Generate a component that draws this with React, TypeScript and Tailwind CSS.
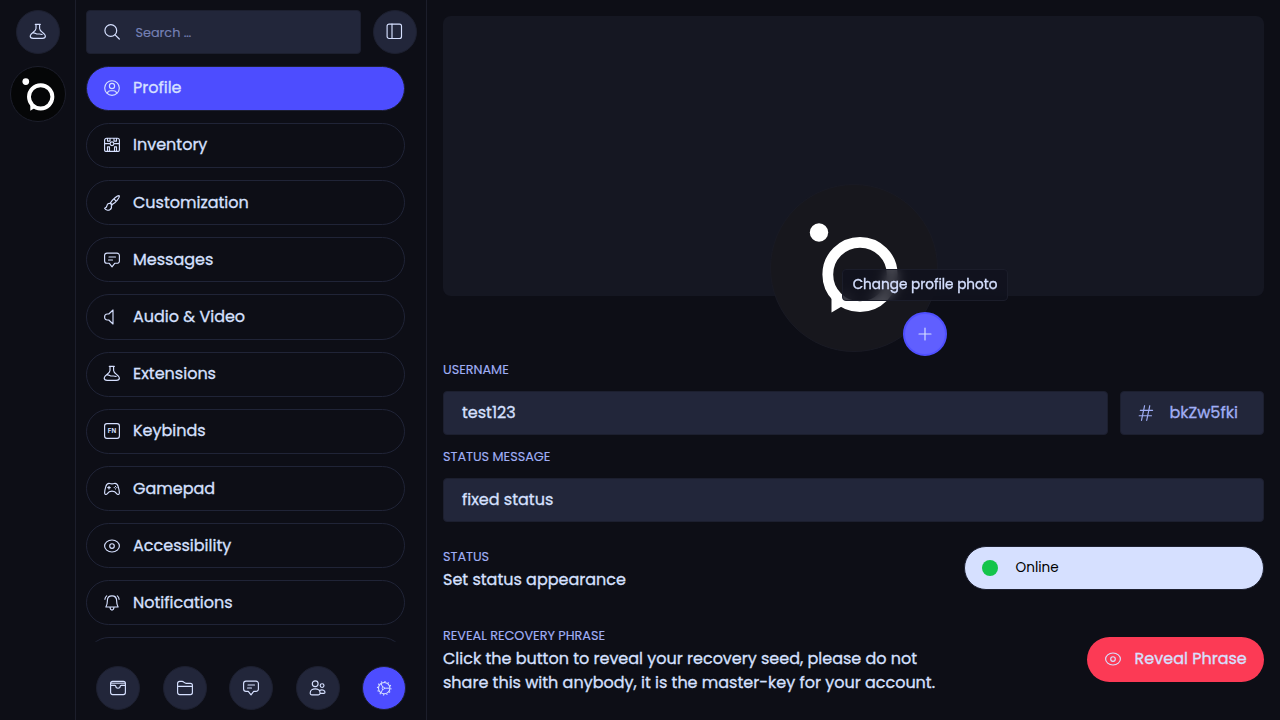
import type { ReactNode } from "react";

type IconProps = { className?: string; children: ReactNode };

function Glyph({ className = "", children }: IconProps) {
  return (
    <svg
      viewBox="0 0 16 16"
      className={"size-4 shrink-0 overflow-visible " + className}
      fill="none"
      stroke="currentColor"
      strokeWidth="1.15"
      strokeLinecap="round"
      strokeLinejoin="round"
    >
      {children}
    </svg>
  );
}

const Beaker = () => (
  <Glyph>
    <path d="M5.300.4h5M6 .4v4.200c0 1.700-1.500 2.700-3.100 3.900C1.300 9.700.2 11 .2 12.100c0 1.400 1.200 2.300 3 2.300h9.200c1.800 0 3-.9 3-2.300 0-1.100-1.200-2.400-2.800-3.600C11 7.300 9.600 6.300 9.600 4.600V.4M2.800 9c2-.7 3 .8 4.700 1 1.700.1 2.700-.4 4.600.5" />
  </Glyph>
);
const User = () => (
  <Glyph>
    <circle cx="8" cy="8" r="7.300" />
    <circle cx="8" cy="6" r="2.600" />
    <path d="M3.300 13.400c.4-2 1.700-2.700 3.200-2.700h3c1.500 0 2.800.7 3.200 2.700" />
  </Glyph>
);
const Inventory = () => (
  <Glyph>
    <path d="M2.600 1.200h10.800a2 2 0 0 1 2 2v10.100a1 1 0 0 1-1 1H1.600a1 1 0 0 1-1-1V3.200a2 2 0 0 1 2-2ZM.6 6.600h5M10.400 6.600h5M3.500 1.200v2.900h2.500V1.200M10 1.200v2.900h2.500V1.200M3.500 14.300V9.800h2v4.500M10.500 14.300V9.800h2v4.500" />
    <circle cx="8" cy="6.700" r="1.900" />
  </Glyph>
);
const Brush = () => (
  <Glyph>
    <path d="M15.300.7c-1.800-.5-6.700 3.600-8.800 7.200l1.700 1.700C11.800 7.500 15.900 2.500 15.300.7ZM6.300 8.500c-1.800-.5-3.100.5-3.300 2.100-.2 1.500-.9 2.200-2.400 2.700.9 1.600 3.400 2.500 5.200 1.500 1.500-.9 2-2.600 1.500-3.900M6.100 8.300l1.900 1.900M10.500 4.500l1.200 1.200" />
  </Glyph>
);
const Chat = () => (
  <Glyph>
    <path d="M3 1.100h10a2.400 2.400 0 0 1 2.400 2.400v5.400a2.400 2.400 0 0 1-2.400 2.400h-2.300L8 14.900l-2.700-3.600H3A2.400 2.400 0 0 1 .6 8.900V3.500A2.400 2.400 0 0 1 3 1.100ZM5 5h6.500M4.500 8h4" />
  </Glyph>
);
const Speaker = () => (
  <Glyph>
    <path d="M9 1v14l-4.200-4H3.300C1.400 11 .6 9.800.6 8s.8-3 2.700-3h1.500L9 1Z" />
  </Glyph>
);
const Keyboard = () => (
  <Glyph>
    <rect x=".6" y=".6" width="14.800" height="14.800" rx="2.300" />
    <text x="8" y="10.400" textAnchor="middle" fontSize="6.200" fontWeight="700" fill="currentColor" stroke="none" fontFamily="Inter, sans-serif">
      FN
    </text>
  </Glyph>
);
const Gamepad = () => (
  <Glyph>
    <path d="M5 2.300c.8 0 1 .6 3 .6s2.200-.6 3-.6c1.500 0 2.600 1.100 3.200 3.300.7 2.200 1.200 4.500 1.200 6.200 0 1.800-1.700 2.300-2.700.8-1-1.600-1.900-2.500-4.700-2.500s-3.700.9-4.700 2.500c-1 1.500-2.700 1-2.700-.8 0-1.700.5-4 1.200-6.200C2.400 3.400 3.500 2.300 5 2.300ZM3.700 6.600h2.600M5 5.300v2.600M10.200 6.600h.1M12.800 6.600h.1M11.500 5.300v.1M11.500 7.900v.1" />
  </Glyph>
);
const Eye = ({ className = "" }: { className?: string }) => (
  <Glyph className={className}>
    <path d="M8 2c4.300 0 7.400 2.900 7.400 6S12.300 14 8 14 .6 11.100.6 8 3.700 2 8 2Z" />
    <circle cx="8" cy="8" r="2.300" />
  </Glyph>
);
const Bell = () => (
  <Glyph>
    <path d="M8 .9c-3 0-4.600 2.200-4.600 4.700 0 3-.3 4.200-1.500 6.400h12.200c-1.200-2.200-1.500-3.400-1.500-6.400C12.600 3.100 11 .9 8 .9ZM6 12.300c.2 1.700.9 2.800 2 2.800s1.800-1.100 2-2.800M2.700.9C1.500 1.800 1 2.800.9 4.300M13.300.9c1.200.9 1.700 1.900 1.800 3.400" />
  </Glyph>
);
const Archive = () => (
  <Glyph>
    <path d="M2.600 1.400h10.800a2 2 0 0 1 2 2v9.200a2 2 0 0 1-2 2H2.600a2 2 0 0 1-2-2V3.400a2 2 0 0 1 2-2ZM.6 5.300h4.200c.7 0 1 .4 1 1 0 1.100.8 1.900 2.200 1.900s2.200-.8 2.200-1.900c0-.6.300-1 1-1h4.200" />
    <path d="M1 3.300h14" strokeOpacity=".7" strokeWidth="1.400" />
  </Glyph>
);
const Folder = () => (
  <Glyph>
    <path d="M.6 12.600V3.400a2 2 0 0 1 2-2h2.500c1.800 0 2.200 1.900 4 1.900h4.300a2 2 0 0 1 2 2v7.300a2 2 0 0 1-2 2H2.600a2 2 0 0 1-2-2ZM.6 6.300h14.800" />
  </Glyph>
);
const Users = () => (
  <Glyph>
    <g transform="translate(-.5 0)">
      <circle cx="5.700" cy="3.700" r="2.900" />
      <circle cx="12.600" cy="5.600" r="1.900" />
      <path d="M5.700 8.900c2.800 0 4.900 1.700 4.900 4 0 1.300-.6 1.900-1.700 1.900H2.500C1.300 14.800.7 14.200.7 12.900c0-2.300 2.200-4 5-4ZM10.200 10.400c3-1.300 5.300.2 5.300 1.900 0 .9-.5 1.100-1.200 1.100h-3.500" />
    </g>
  </Glyph>
);
const Cog = () => (
  <Glyph>
    <circle cx="8.200" cy="8.200" r="5.700" strokeWidth="1.100" />
    <circle cx="8.200" cy="8.200" r="6.700" strokeWidth="1.200" strokeLinecap="butt" strokeDasharray="1.200 2.308" />
    <circle cx="7.300" cy="8.200" r="1.200" strokeWidth=".8" />
    <path d="M8.700 8.200h4.800M6.700 7.100 5.100 3.800M6.700 9.300l-1.600 3.300" strokeWidth="1" />
  </Glyph>
);
const Magnifier = () => (
  <Glyph>
    <circle cx="6.800" cy="6.500" r="5.900" strokeWidth="1.200" />
    <path d="m11.100 10.800 4.200 4.200" strokeWidth="1.200" />
  </Glyph>
);
const Sidebar = () => (
  <Glyph>
    <rect x=".1" y=".1" width="14.400" height="14.400" rx="2" />
    <path d="M5 .1v14.400" />
  </Glyph>
);
const Hash = () => (
  <Glyph>
    <path d="M6.600.7 3.500 15.400M11.800.7 8.700 15.400M2.300 5.300h12.300M1.200 10.700h12.300" />
  </Glyph>
);
const Plus = () => (
  <Glyph>
    <path d="M8 2v12M2 8h12" />
  </Glyph>
);

function Logo({ className }: { className: string }) {
  return (
    <svg viewBox="0 0 168 168" className={className}>
      <circle cx="90" cy="90.500" r="32.200" fill="none" stroke="#fff" strokeWidth="10.800" />
      <path d="M61.500 112v16.500l11-6.500-2-10z" fill="#fff" />
      <circle cx="49" cy="48.500" r="9.200" fill="#fff" />
    </svg>
  );
}

function RoundButton({ children, active = false }: { children: ReactNode; active?: boolean }) {
  return (
    <button
      className={
        "flex size-11 shrink-0 items-center justify-center rounded-full border " +
        (active ? "border-[#1d2035] bg-[#4d4dff]" : "border-[#1d2030] bg-[#22263a]")
      }
    >
      {children}
    </button>
  );
}

const items = [
  { name: "Profile", icon: <User /> },
  { name: "Inventory", icon: <Inventory /> },
  { name: "Customization", icon: <Brush /> },
  { name: "Messages", icon: <Chat /> },
  { name: "Audio & Video", icon: <Speaker /> },
  { name: "Extensions", icon: <Beaker /> },
  { name: "Keybinds", icon: <Keyboard /> },
  { name: "Gamepad", icon: <Gamepad /> },
  { name: "Accessibility", icon: <Eye /> },
  { name: "Notifications", icon: <Bell /> },
];

const label = "block text-[12.8px] leading-[18px] text-[#a0aef5] [-webkit-text-stroke:0.15px]";
const field = "flex h-11 items-center rounded-[4px] border border-[#1c1f2f] bg-[#22263a]";

export default function App() {
  return (
    <div className="flex h-[720px] w-[1280px] overflow-hidden bg-[#0d0e16] font-[Poppins,Inter,sans-serif] text-base text-[#d6e0ff] [-webkit-text-stroke:0.3px]">
      <nav className="flex w-[76px] shrink-0 flex-col items-center gap-3 border-r border-[#1c1e2b] pt-[10px]">
        <RoundButton>
          <Beaker />
        </RoundButton>
        <div className="size-14 overflow-hidden rounded-full border border-[#1c1e2b] bg-[#050607]">
          <Logo className="-ml-[2.5px] -mt-[3.4px] size-[61px]" />
        </div>
      </nav>

      <aside className="flex w-[351px] shrink-0 flex-col border-r border-[#1c1e2b] pl-[10px] pt-[10px]">
        <div className="flex gap-3">
          <div className={field + " w-[275px] pl-[17px]"}>
            <Magnifier />
            <span className="ml-[15.5px] pt-px text-[12.8px] text-[#7580b5] [-webkit-text-stroke:0.15px]">Search …</span>
          </div>
          <RoundButton>
            <Sidebar />
          </RoundButton>
        </div>
        <div className="mt-[11.6px] flex h-[576.4px] w-[319px] flex-col gap-3 overflow-hidden">
          {items.map((item, i) => (
            <button
              key={item.name}
              className={
                "flex h-[45.2px] shrink-0 items-center gap-[13px] rounded-full border pl-[17px] " +
                (i === 0 ? "border-[#1d2035] bg-[#4d4dff]" : "border-[#202437]")
              }
            >
              {item.icon}
              <span className="relative top-[0.1px]">{item.name}</span>
            </button>
          ))}
          <div className="h-[45.2px] shrink-0 rounded-full border border-[#202437]" />
        </div>
        <div className="mt-6 flex w-[320px] justify-between pl-[10px]">
          <RoundButton>
            <Archive />
          </RoundButton>
          <RoundButton>
            <Folder />
          </RoundButton>
          <RoundButton>
            <Chat />
          </RoundButton>
          <RoundButton>
            <Users />
          </RoundButton>
          <RoundButton active>
            <Cog />
          </RoundButton>
        </div>
      </aside>

      <main className="flex w-[853px] flex-col px-4 pt-4">
        <section className="relative h-[280px] shrink-0 rounded-lg bg-[#151722]">
          <div className="absolute left-[327px] top-[168px] size-[168px] rounded-full border border-[#191a24] bg-[#17171d]">
            <Logo className="-ml-px -mt-px size-[168px]" />
          </div>
          <button className="absolute left-[460px] top-[296px] flex size-11 items-center justify-center rounded-full border-2 border-[#4f4fff] bg-[#605fff]">
            <Plus />
          </button>
          <div className="absolute left-[399px] top-[253px] flex h-8 w-[166px] items-center justify-center rounded-[4px] border border-[#1b1d2a] bg-[#10121d]/75 text-[13.6px] backdrop-blur-[6px]">
            <span className="whitespace-nowrap">Change profile photo</span>
          </div>
        </section>

        <span className={label + " mt-[65px]"}>USERNAME</span>
        <div className="mt-3 flex gap-3">
          <div className={field + " w-[665px] pl-[18px]"}>
            <span>test123</span>
          </div>
          <div className={field + " w-[144px] pl-[17px] text-[#a0aef5]"}>
            <Hash />
            <span className="ml-[15.500px]">bkZw5fki</span>
          </div>
        </div>
        <span className={label + " mt-[13px]"}>STATUS MESSAGE</span>
        <div className={field + " mt-3 pl-[18px]"}>
          <span>fixed status</span>
        </div>

        <div className="mt-[24px] flex items-start justify-between">
          <div className="pt-[2px]">
            <span className={label}>STATUS</span>
            <p className="mt-[2px] leading-6">Set status appearance</p>
          </div>
          <div className="flex h-11 w-[300px] items-center rounded-full border border-[#1d2030] bg-[#d6e0ff] pl-[17px] text-black [-webkit-text-stroke:0px]">
            <span className="size-4 rounded-full bg-[#14c44a]" />
            <span className="ml-[17.5px] text-[13.6px]">Online</span>
          </div>
        </div>

        <div className="mt-[35px] flex items-start justify-between">
          <div>
            <span className={label}>REVEAL RECOVERY PHRASE</span>
            <p className="mt-[2px] whitespace-nowrap leading-6">
              Click the button to reveal your recovery seed, please do not
              <br />
              share this with anybody, it is the master-key for your account.
            </p>
          </div>
          <button className="mt-[10px] flex h-[45px] w-[177px] items-center rounded-full bg-[#fc3a55] pl-[18px]">
            <Eye className="-mt-px" />
            <span className="relative -top-px ml-[13.6px] whitespace-nowrap">Reveal Phrase</span>
          </button>
        </div>
      </main>
    </div>
  );
}
